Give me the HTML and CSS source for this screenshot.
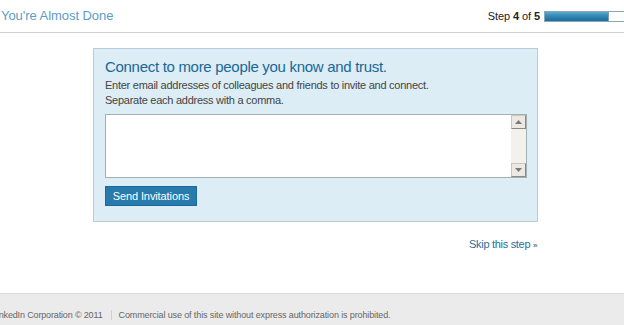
FILE: index.html
```html
<!DOCTYPE html>
<html>
<head>
<meta charset="utf-8">
<link rel="stylesheet" href="styles.css">
</head>
<body>
<div class="page">
  <header class="header">
    <h1 class="title">You're Almost Done</h1>
    <div class="step">
      <span class="step-text">Step <b>4</b> of <b>5</b></span>
      <div class="progress"><div class="progress-fill" style="width:80%"></div></div>
    </div>
  </header>
  <main class="main">
    <section class="box">
      <h2 class="box-title">Connect to more people you know and trust.</h2>
      <p class="box-text">Enter email addresses of colleagues and friends to invite and connect.<br>Separate each address with a comma.</p>
      <div class="textarea">
        <div class="ta-field"></div>
        <div class="scrollbar">
          <div class="sb-btn"><svg width="7" height="4" viewBox="0 0 7 4"><path d="M0 4 L3.5 0 L7 4 Z" fill="#7a7a7a"/></svg></div>
          <div class="sb-track"></div>
          <div class="sb-btn"><svg width="7" height="4" viewBox="0 0 7 4"><path d="M0 0 L3.5 4 L7 0 Z" fill="#7a7a7a"/></svg></div>
        </div>
      </div>
      <button class="send">Send Invitations</button>
    </section>
    <div class="skip-row"><a class="skip" href="#">Skip this step</a> <span class="raquo">»</span></div>
  </main>
  <footer class="footer">
    <span class="copy">LinkedIn Corporation © 2011</span>
    <span class="sep"></span>
    <span class="legal">Commercial use of this site without express authorization is prohibited.</span>
  </footer>
</div>
</body>
</html>
```
FILE: styles.css
```css
* { box-sizing: border-box; }
html, body { margin: 0; padding: 0; background: #fff; }
body { font-family: "Liberation Sans", Arial, sans-serif; color: #333; overflow: hidden; }
.page { width: 624px; height: 325px; display: flex; flex-direction: column; }
.header { height: 33px; border-bottom: 1px solid #cfd3d6; display: flex; align-items: center; justify-content: space-between; padding-left: 1px; }
.title { margin: 0; font-size: 13px; font-weight: normal; color: #5c9dc4; position: relative; top: -1px; letter-spacing: -0.05px; }
.step { display: flex; align-items: center; gap: 4px; }
.step-text { font-size: 11px; color: #222; letter-spacing: -0.1px; }
.step-text b { font-weight: bold; }
.progress { width: 82px; height: 11px; border: 1px solid #8aa5b6; background: #fff; margin-right: -2px; }
.progress-fill { height: 100%; background: linear-gradient(#5aa8cc, #2f86b3 50%, #1c6c98); border-right: 1px solid #7e9aae; }
.main { flex: 1; display: flex; flex-direction: column; padding-top: 15px; }
.box { margin-left: 93px; width: 445px; height: 174px; background: #dcedf6; border: 1px solid #b9cdd8; padding: 9px 11px 0 11px; }
.box-title { margin: 0; font-size: 15px; font-weight: normal; color: #1a6796; line-height: 17px; letter-spacing: -0.3px; }
.box-text { margin: 3px 0 0; font-size: 11px; line-height: 15px; color: #444; letter-spacing: -0.26px; }
.textarea { margin-top: 6px; width: 422px; height: 64px; border: 1px solid #a3aeb6; background: #fff; display: flex; }
.ta-field { flex: 1; }
.scrollbar { width: 15px; display: flex; flex-direction: column; background: #eceae4; }
.sb-btn { height: 14px; background: #ece9e2; border: 1px solid #c9c6bd; border-right-color: #8c8a84; border-bottom-color: #8c8a84; display: flex; align-items: center; justify-content: center; }
.sb-track { flex: 1; background: #f3f1ec; }
.send { margin-top: 8px; display: block; width: 92px; height: 20px; padding: 0; border: 1px solid #1e6a96; background: #277aab; color: #fff; font-family: "Liberation Sans", Arial, sans-serif; font-size: 11px; line-height: 18px; text-align: center; letter-spacing: -0.1px; }
.skip-row { margin-left: 469px; margin-top: 16px; font-size: 11px; color: #2b6e9b; letter-spacing: -0.3px; }
.skip { color: #2b6e9b; text-decoration: none; }
.raquo { font-size: 8px; color: #333; }
.footer { height: 32px; background: #ebebeb; border-top: 1px solid #dcdcdc; display: flex; align-items: center; font-size: 9px; color: #666; padding-top: 10px; }
.copy { margin-left: -8px; letter-spacing: -0.15px; }
.sep { width: 1px; height: 10px; background: #d0d0d0; margin: 0 7px 0 8px; }
.legal { letter-spacing: -0.12px; }
```
